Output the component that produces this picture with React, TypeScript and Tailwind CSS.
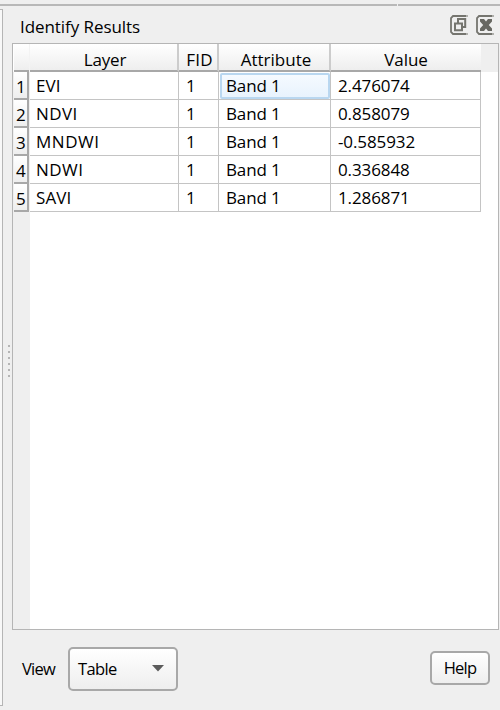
import React from "react";

const rows = [
  { layer: "EVI", value: "2.476074", ls: "tracking-[0.1px]" },
  { layer: "NDVI", value: "0.858079", ls: "tracking-[0.45px]" },
  { layer: "MNDWI", value: "-0.585932", ls: "tracking-[0.55px]" },
  { layer: "NDWI", value: "0.336848", ls: "tracking-[0.45px]" },
  { layer: "SAVI", value: "1.286871", ls: "tracking-[0.1px]" },
];

const headers = [
  { label: "Layer", cls: "w-[149px] pl-[3px] tracking-[-0.15px]" },
  { label: "FID", cls: "w-10 pl-[3px] tracking-[0.2px]" },
  { label: "Attribute", cls: "w-28 pl-[4px] tracking-[0px]" },
  { label: "Value", cls: "w-[150px] tracking-[-0.05px]" },
];

function FloatIcon() {
  return (
    <svg width="18" height="20" viewBox="0 0 18 20" fill="none" stroke="#75756f">
      <path d="M16 1H3L1 3V17L3 19H16" strokeWidth="1.8" />
      <path d="M16 1h2M16 19h2" stroke="#b0b0ac" strokeWidth="1.8" />
      <path d="M8 8V4H15.2V12H12.5" strokeWidth="2" />
      <path d="M5 8.5H12V15.2H5z" strokeWidth="2" />
    </svg>
  );
}

function CloseIcon() {
  return (
    <svg width="18" height="20" viewBox="0 0 18 20" fill="none" stroke="#75756f">
      <path d="M16 1H3L1 3V17L3 19H16" strokeWidth="1.8" />
      <path d="M16 1h2M16 19h2" stroke="#b0b0ac" strokeWidth="1.8" />
      <path
        d="M4 4H8L10 6.5L12 4H16V6.5L12.8 10L16 13.5V16H12L10 13.5L8 16H4V13.5L7.2 10L4 6.5z"
        fill="#686862"
        stroke="none"
      />
    </svg>
  );
}

export default function App() {
  return (
    <div className="flex h-[710px] w-[500px] flex-col overflow-hidden bg-[#efefef] font-['Open_Sans','Noto_Sans',sans-serif] text-[17px] leading-6 tracking-[-0.6px] text-black">
      <div className="mt-1 flex h-[2px] shrink-0 gap-px">
        <div className="w-[397px] bg-[#b8b8b8]" />
        <div className="flex-1 bg-[#b8b8b8]" />
      </div>
      <div className="flex min-h-0 flex-1">
        <div className="mt-[3px] h-[697px] w-[3px] shrink-0 border-y border-r border-[#b5b5b5] bg-[#f8f8f8]" />
        <div className="flex w-[9px] shrink-0 flex-col items-center gap-1 pt-[339px] pl-[3px]">
          {[0, 1, 2, 3, 4, 5].map((n) => (
            <i key={n} className="size-[2px] shrink-0 bg-[#b5b5b5]" />
          ))}
        </div>
        <div className="flex w-[488px] shrink-0 flex-col">
          <div className="flex h-[37px] shrink-0 items-start">
            <h1 className="mt-[9px] ml-2 flex-1 whitespace-nowrap tracking-[-0.07px]">Identify Results</h1>
            <div className="mt-[9px] mr-[6px] flex gap-2">
              <FloatIcon />
              <CloseIcon />
            </div>
          </div>
          <div className="flex h-[587px] w-[487px] shrink-0 flex-col border border-[#b5b5b5] bg-white">
            <div className="flex h-7 shrink-0 bg-[#efefef]">
              <div className="flex w-[468px] bg-white">
                <div className="ml-px h-7 w-[15px] shrink-0 border-b-2 border-[#a8a8a8] bg-linear-to-b from-white to-[#eeeeee]" />
                <div className="h-7 w-px shrink-0 bg-[#f3f3f3]" />
                {headers.map((h, i) => (
                  <div
                    key={h.label}
                    className={`${h.cls} flex h-7 shrink-0 justify-center border-b-2 border-b-[#a8a8a8] bg-linear-to-b from-white to-[#eeeeee] pt-1 ${i < 3 ? "border-r-2 border-r-[#cccccc]" : ""}`}
                  >
                    {h.label}
                  </div>
                ))}
              </div>
            </div>
            <div className="flex min-h-0 flex-1">
              <div className="w-[17px] shrink-0 bg-[#efefef]">
                {rows.map((r, i) => (
                  <div key={r.layer} className="ml-px h-7 w-[15px] border-r-2 border-b-2 border-[#a8a8a8] bg-linear-to-b from-white to-[#eeeeee] pt-[3px] pl-[2px]">
                    {i + 1}
                  </div>
                ))}
              </div>
              <div>
                {rows.map((r, i) => (
                  <div key={r.layer} className="flex h-7 whitespace-nowrap">
                    <div className={`w-[149px] border-r border-b border-[#c4c4c4] pt-[2px] pl-[6px] ${r.ls}`}>{r.layer}</div>
                    <div className="w-10 border-r border-b border-[#c4c4c4] pt-[2px] pl-[7px]">1</div>
                    <div className="w-28 border-r border-b border-[#c4c4c4] tracking-[-0.15px]">
                      <div
                        className={
                          i === 0
                            ? "mt-px ml-px h-[26px] w-[110px] rounded-[2px] border-2 border-[#b9d7f0] bg-linear-to-b from-[#f5faff] to-[#e8f3fd] pl-1 leading-[22px]"
                            : "pt-[2px] pl-[7px]"
                        }
                      >
                        Band 1
                      </div>
                    </div>
                    <div className="w-[150px] border-r border-b border-[#c4c4c4] pt-[2px] pl-[7px] tracking-[-0.1px]">{r.value}</div>
                  </div>
                ))}
              </div>
            </div>
          </div>
          <div className="flex h-[77px] items-center pl-[10px] text-[16.5px]">
            <span className="w-[46px] tracking-[-0.75px]">View</span>
            <button className="flex h-11 w-[110px] items-center justify-between rounded-[5px] border-2 border-[#a8a8a8] bg-linear-to-b from-white to-[#eeeeee] pr-3 pl-2 tracking-[-0.65px]">
              Table
              <svg width="12" height="7" viewBox="0 0 12 7">
                <path d="M0 0h12L6 6.5z" fill="#5c5c5c" />
              </svg>
            </button>
            <button className="mt-[-2px] mr-[10px] ml-auto h-[34px] w-[60px] rounded-[5px] border-2 border-[#a8a8a8] bg-linear-to-b from-white to-[#eeeeee] tracking-[-0.75px]">
              Help
            </button>
          </div>
        </div>
      </div>
    </div>
  );
}
